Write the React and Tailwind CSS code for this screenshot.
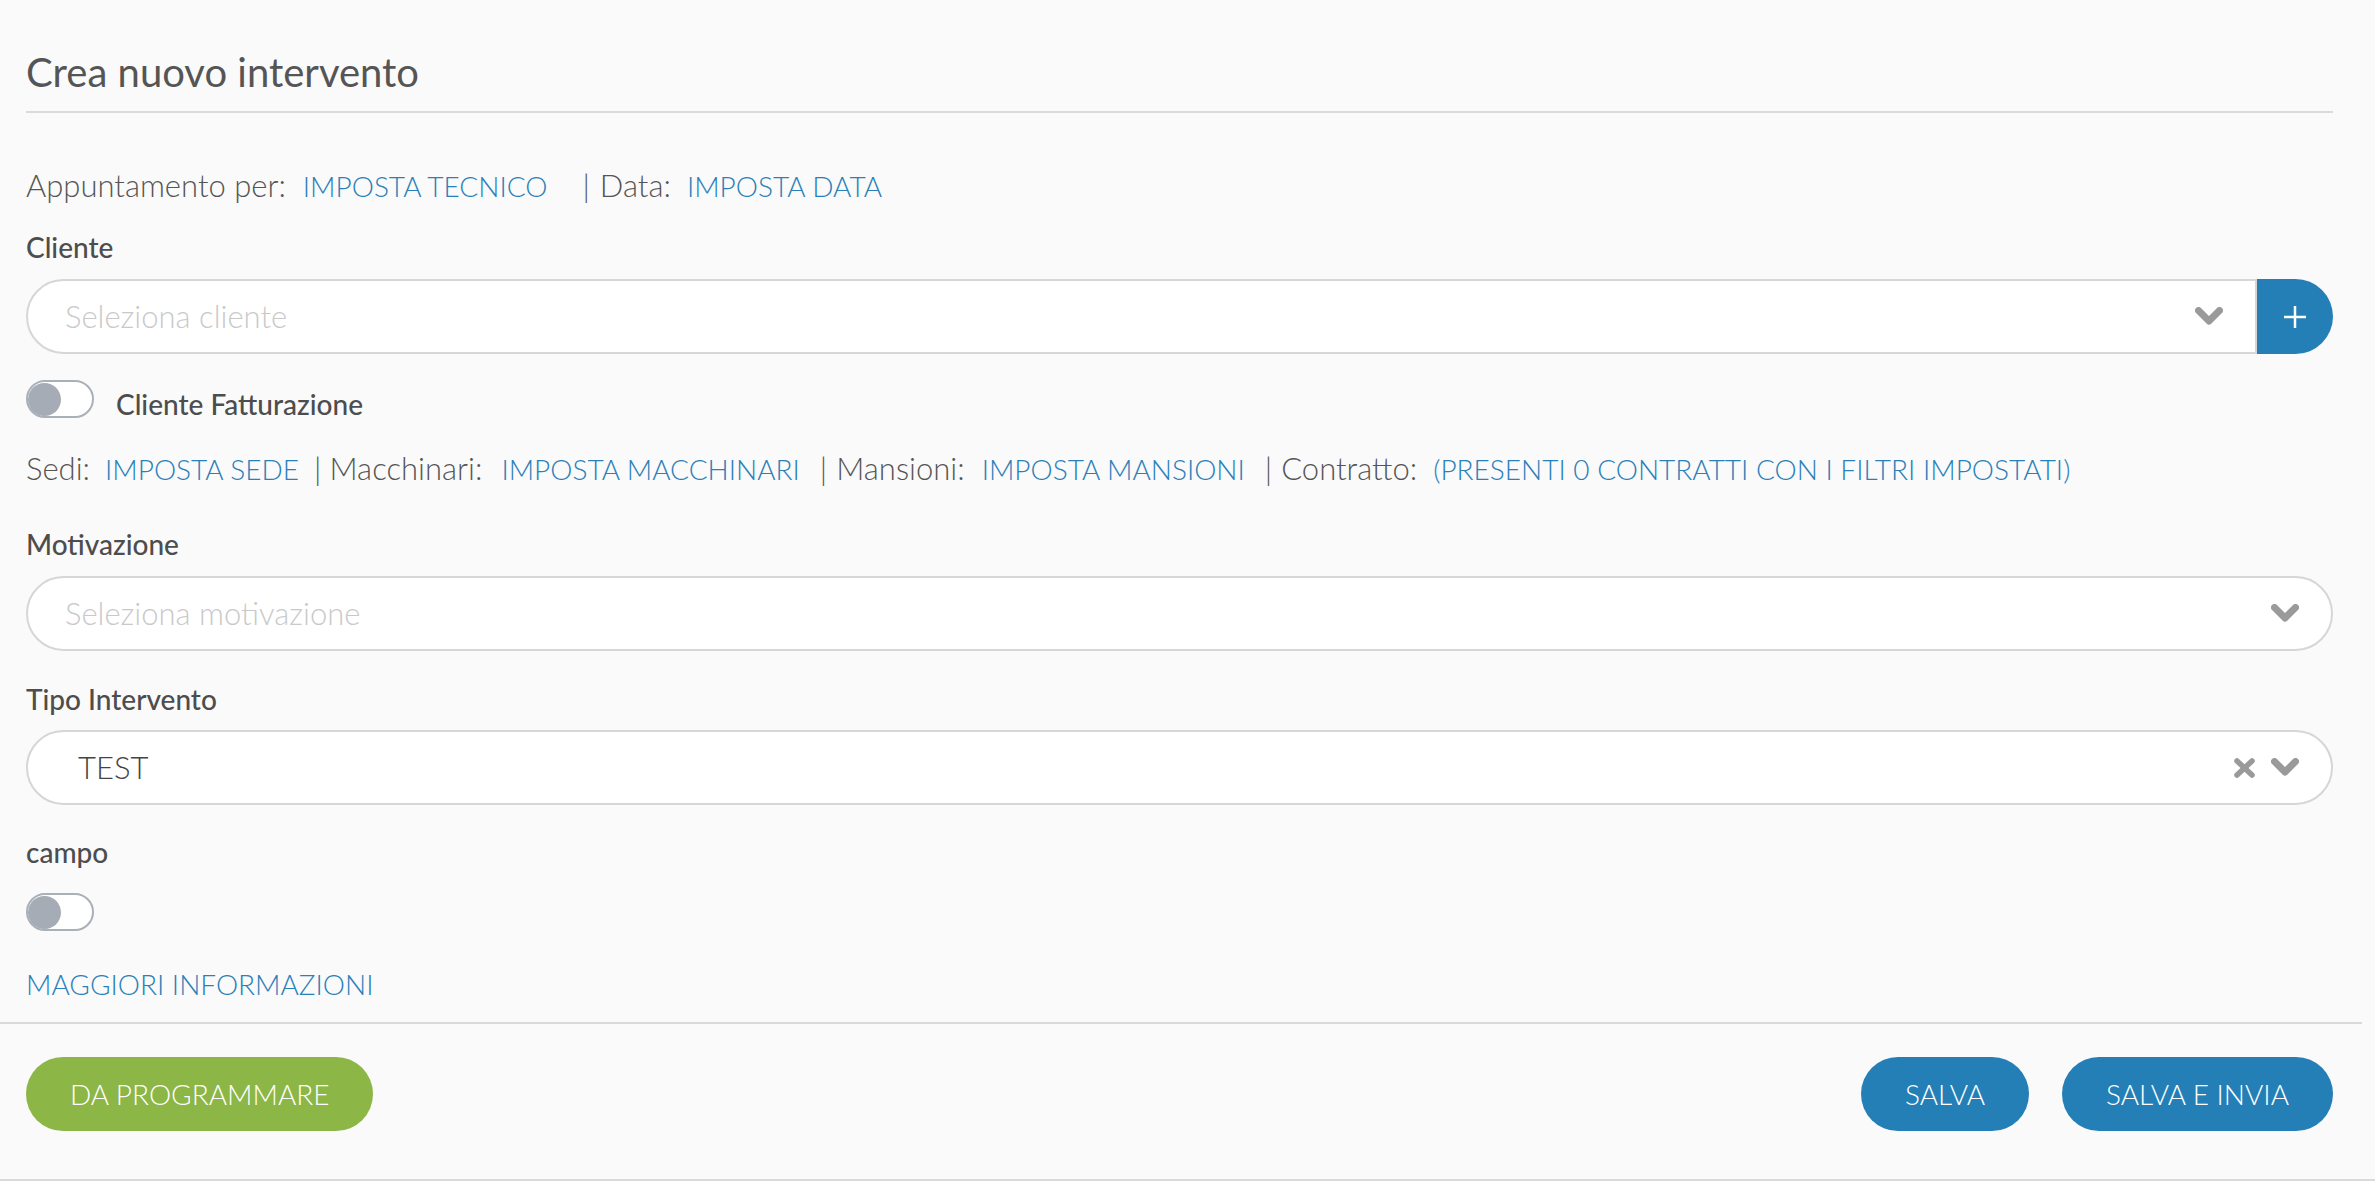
import React from "react";

function Chevron() {
  return (
    <svg width="28" height="19" viewBox="0 0 28 19" className="shrink-0">
      <polyline points="3.5,3.5 14,14 24.5,3.5" fill="none" stroke="#9a9a9a" strokeWidth="7" strokeLinecap="round" strokeLinejoin="round" />
    </svg>
  );
}

function Cross() {
  return (
    <svg width="21" height="20" viewBox="0 0 21 20" className="shrink-0">
      <path d="M3 3 L18 17 M18 3 L3 17" fill="none" stroke="#9a9a9a" strokeWidth="5.5" strokeLinecap="round" />
    </svg>
  );
}

function Toggle() {
  return (
    <div className="w-[68px] h-[38px] rounded-full border-2 border-[#a9b0b8] bg-white flex items-center">
      <div className="w-[33px] h-[33px] rounded-full bg-[#a5acb5]" />
    </div>
  );
}

function Label({ children, className = "" }) {
  return (
    <div className={"text-[28px] leading-[32px] font-medium text-[#4d4d4d] " + className}>{children}</div>
  );
}

function Link({ children, className = "" }) {
  return <span className={"text-[28px] text-[#2a80b9] " + className}>{children}</span>;
}

export default function App() {
  return (
    <div className="min-h-screen bg-[#fafafa] font-['Lato',sans-serif] border-b-2 border-[#dadada]">
      <div className="pl-[26px] pr-[42px]">
        <div className="pt-[48px] pb-[15px] border-b-2 border-[#dadada]">
          <h1 className="text-[40px] leading-[48px] text-[#555555]">Crea nuovo intervento</h1>
        </div>

        <div className="mt-[54px] text-[31px] leading-[36px] font-light text-[#555555] whitespace-nowrap">
          <span>Appuntamento per:</span>
          <Link className="ml-[17px]">IMPOSTA TECNICO</Link>
          <span className="ml-[35px]">|</span>
          <span className="ml-[10px]">Data:</span>
          <Link className="ml-[16px]">IMPOSTA DATA</Link>
        </div>

        <Label className="mt-[27px]">Cliente</Label>
        <div className="mt-[16px] flex h-[75px]">
          <div className="flex-1 flex items-center bg-white border-2 border-[#d6d6d6] rounded-l-full pl-[37px] pr-[32px]">
            <span className="flex-1 text-[31px] font-light text-[#c9c9c9]">Seleziona cliente</span>
            <Chevron />
          </div>
          <button className="w-[76px] bg-[#237fb6] rounded-r-full flex items-center justify-center">
            <svg width="22" height="22" viewBox="0 0 22 22">
              <path d="M11 0 V22 M0 11 H22" stroke="#ffffff" strokeWidth="2.5" />
            </svg>
          </button>
        </div>

        <div className="mt-[26px] flex items-center h-[38px]">
          <Toggle />
          <span className="ml-[22px] mt-[10px] text-[28px] leading-[32px] font-medium text-[#4d4d4d]">Cliente Fatturazione</span>
        </div>

        <div className="mt-[32px] text-[31px] leading-[36px] font-light text-[#555555] whitespace-nowrap">
          <span>Sedi:</span>
          <Link className="ml-[15px]">IMPOSTA SEDE</Link>
          <span className="ml-[15px]">|</span>
          <span className="ml-[8px]">Macchinari:</span>
          <Link className="ml-[19px]">IMPOSTA MACCHINARI</Link>
          <span className="ml-[20px]">|</span>
          <span className="ml-[9px]">Mansioni:</span>
          <Link className="ml-[17px]">IMPOSTA MANSIONI</Link>
          <span className="ml-[20px]">|</span>
          <span className="ml-[9px]">Contratto:</span>
          <Link className="ml-[16px]">(PRESENTI 0 CONTRATTI CON I FILTRI IMPOSTATI)</Link>
        </div>

        <Label className="mt-[41px]">Motivazione</Label>
        <div className="mt-[16px] flex items-center h-[75px] bg-white border-2 border-[#d6d6d6] rounded-full pl-[37px] pr-[32px]">
          <span className="flex-1 text-[31px] font-light text-[#c9c9c9]">Seleziona motivazione</span>
          <Chevron />
        </div>

        <Label className="mt-[32px]">Tipo Intervento</Label>
        <div className="mt-[15px] flex items-center h-[75px] bg-white border-2 border-[#d6d6d6] rounded-full pl-[50px] pr-[32px]">
          <span className="flex-1 text-[31px] font-light text-[#444444]">TEST</span>
          <Cross />
          <span className="w-[16px]" />
          <Chevron />
        </div>

        <Label className="mt-[31px]">campo</Label>
        <div className="mt-[25px]">
          <Toggle />
        </div>

        <div className="mt-[37px] text-[28px] leading-[32px] font-light">
          <Link>MAGGIORI INFORMAZIONI</Link>
        </div>
      </div>

      <div className="mt-[22px] mr-[13px] border-t-2 border-[#dadada] pt-[33px] pb-[45px] pl-[26px] pr-[29px] flex items-center">
        <button className="h-[74px] px-[44px] rounded-full bg-[#8cb646] text-white text-[28px] font-light">DA PROGRAMMARE</button>
        <div className="flex-1" />
        <button className="h-[74px] px-[44px] rounded-full bg-[#237fb6] text-white text-[28px] font-light">SALVA</button>
        <button className="ml-[33px] h-[74px] px-[44px] rounded-full bg-[#237fb6] text-white text-[28px] font-light">SALVA E INVIA</button>
      </div>
    </div>
  );
}
